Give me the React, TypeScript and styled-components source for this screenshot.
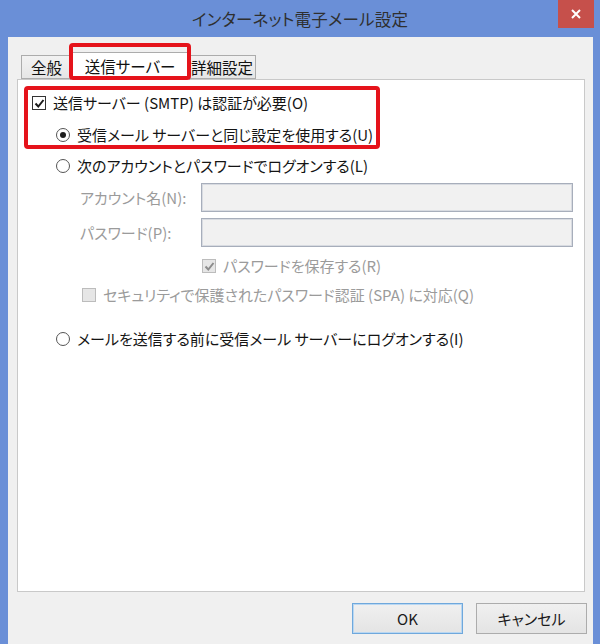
import React from 'react';
import styled, { createGlobalStyle } from 'styled-components';

const Global = createGlobalStyle`
  html, body { margin: 0; padding: 0; }
  body {
    width: 600px;
    height: 644px;
    overflow: hidden;
    font-family: "Noto Sans CJK JP", "Noto Sans", sans-serif;
  }
  * { box-sizing: border-box; }
`;

const Window = styled.div`
  width: 600px;
  height: 644px;
  background: #6a8fd7;
  display: flex;
  flex-direction: column;
`;

const TitleBar = styled.div`
  height: 37px;
  display: grid;
  grid-template-columns: 1fr auto 1fr;
  align-items: start;
`;

const Title = styled.div`
  grid-column: 2;
  font-size: 16.5px;
  line-height: 38px;
  color: #2f2f2f;
  font-feature-settings: "palt";
  letter-spacing: 0.2px;
`;

const CloseButton = styled.div`
  grid-column: 3;
  justify-self: end;
  margin-right: 6px;
  width: 36px;
  height: 28px;
  background: #c6504b;
  display: flex;
  align-items: center;
  justify-content: center;
`;

const Client = styled.div`
  flex: 1;
  margin: 0 7px 0 8px;
  background: #f0f0f0;
  padding: 18px 8px 0 9px;
  display: flex;
  flex-direction: column;
`;

const TabRow = styled.div`
  display: flex;
  align-items: flex-end;
  padding-left: 4px;
  height: 25px;
  margin-bottom: -1px;
  position: relative;
  z-index: 1;
`;

const Tab = styled.div<{ $active?: boolean; $width: number }>`
  position: relative;
  width: ${(p) => p.$width}px;
  height: ${(p) => (p.$active ? '28px' : '24px')};
  margin: ${(p) => (p.$active ? '0 -2px' : '0 0 1px 0')};
  padding-top: ${(p) => (p.$active ? '3px' : '1px')};
  text-align: center;
  background: ${(p) => (p.$active ? '#ffffff' : 'linear-gradient(#f2f2f2, #e6e6e6)')};
  border: 1px solid #acacac;
  border-bottom: ${(p) => (p.$active ? 'none' : '1px solid #acacac')};
  font-size: 15.5px;
  line-height: 21px;
  color: #111;
  z-index: ${(p) => (p.$active ? 2 : 1)};
  font-feature-settings: "palt";
  white-space: nowrap;
`;

const TabHighlight = styled.div`
  position: absolute;
  top: -10px;
  left: -2px;
  right: -2px;
  bottom: 0;
  border: 4px solid #e5131b;
  border-radius: 4px;
  pointer-events: none;
`;

const Panel = styled.div`
  flex: 1;
  background: #ffffff;
  border: 1px solid #c9c9c9;
  padding: 6px 0 0 6px;
  display: flex;
  flex-direction: column;
  align-items: flex-start;
`;

const Highlight = styled.div`
  width: 356px;
  border: 4px solid #e5131b;
  border-radius: 4px;
  padding: 3px 0 0 4px;
  display: flex;
  flex-direction: column;
  gap: 12px;
`;

const Row = styled.div<{ $indent?: number; $top?: number }>`
  display: flex;
  align-items: center;
  height: 20px;
  margin-left: ${(p) => p.$indent ?? 0}px;
  margin-top: ${(p) => p.$top ?? 0}px;
  gap: 7px;
  white-space: nowrap;
`;

const Text = styled.span<{ $disabled?: boolean }>`
  font-size: 15px;
  line-height: 20px;
  color: ${(p) => (p.$disabled ? '#9b9b9b' : '#141414')};
  font-feature-settings: "palt";
`;

const Box = styled.span<{ $disabled?: boolean }>`
  width: 14px;
  height: 14px;
  flex: none;
  border: 1px solid ${(p) => (p.$disabled ? '#bcbcbc' : '#333333')};
  background: ${(p) => (p.$disabled ? '#e6e6e6' : '#ffffff')};
  display: flex;
  align-items: center;
  justify-content: center;
`;

const RadioCircle = styled.span`
  width: 14px;
  height: 14px;
  flex: none;
  border: 1px solid #555555;
  border-radius: 50%;
  background: #ffffff;
  display: flex;
  align-items: center;
  justify-content: center;
`;

const RadioDot = styled.span`
  width: 6px;
  height: 6px;
  border-radius: 50%;
  background: #1d1d1d;
`;

const FieldRow = styled.div<{ $top: number }>`
  display: flex;
  align-items: center;
  margin-left: 56px;
  margin-top: ${(p) => p.$top}px;
`;

const FieldLabel = styled.span`
  width: 121px;
  font-size: 15px;
  color: #9b9b9b;
  font-feature-settings: "palt";
  white-space: nowrap;
`;

const Input = styled.div`
  width: 372px;
  height: 29px;
  border: 1px solid #a7aebb;
  box-shadow: inset 0 0 0 1px #d8dbe1;
  background: #f1f1f1;
`;

const Footer = styled.div`
  height: 52px;
  display: flex;
  justify-content: flex-end;
  align-items: flex-start;
  padding-top: 11px;
  gap: 13px;
  margin-right: -2px;
`;

const Button = styled.button<{ $default?: boolean }>`
  width: 111px;
  height: 31px;
  border: 1px solid ${(p) => (p.$default ? '#6fa8dc' : '#acacac')};
  box-shadow: ${(p) => (p.$default ? 'inset 0 0 0 1px #b9d7f2' : 'none')};
  background: linear-gradient(#f0f0f0, #e4e4e4);
  font-family: "Noto Sans CJK JP", "Noto Sans", sans-serif;
  font-size: 15px;
  color: #1a1a1a;
  font-feature-settings: "palt";
  padding: 0;
`;

const Check = ({ color }: { color: string }) => (
  <svg width="11" height="11" viewBox="0 0 11 11">
    <path d="M1.5 5.5 L4.3 8.5 L9.5 2" fill="none" stroke={color} strokeWidth="2" />
  </svg>
);

const CheckBox = ({ checked, disabled }: { checked?: boolean; disabled?: boolean }) => (
  <Box $disabled={disabled}>{checked && <Check color={disabled ? '#8c8c8c' : '#1a1a1a'} />}</Box>
);

const Radio = ({ checked }: { checked?: boolean }) => (
  <RadioCircle>{checked && <RadioDot />}</RadioCircle>
);

export default function App() {
  return (
    <>
      <Global />
      <Window>
        <TitleBar>
          <Title>インターネット電子メール設定</Title>
          <CloseButton>
            <svg width="10" height="10" viewBox="0 0 10 10">
              <path d="M1 1 L9 9 M9 1 L1 9" stroke="#ffffff" strokeWidth="2" />
            </svg>
          </CloseButton>
        </TitleBar>
        <Client>
          <TabRow>
            <Tab $width={51}>全般</Tab>
            <Tab $active $width={120}>
              送信サーバー
              <TabHighlight />
            </Tab>
            <Tab $width={68}>詳細設定</Tab>
          </TabRow>
          <Panel>
            <Highlight>
              <Row>
                <CheckBox checked />
                <Text>送信サーバー (SMTP) は認証が必要(O)</Text>
              </Row>
              <Row $indent={24}>
                <Radio checked />
                <Text>受信メール サーバーと同じ設定を使用する(U)</Text>
              </Row>
            </Highlight>
            <Row $indent={32} $top={7}>
              <Radio />
              <Text>次のアカウントとパスワードでログオンする(L)</Text>
            </Row>
            <FieldRow $top={7}>
              <FieldLabel>アカウント名(N):</FieldLabel>
              <Input />
            </FieldRow>
            <FieldRow $top={6}>
              <FieldLabel>パスワード(P):</FieldLabel>
              <Input />
            </FieldRow>
            <Row $indent={178} $top={9}>
              <CheckBox checked disabled />
              <Text $disabled>パスワードを保存する(R)</Text>
            </Row>
            <Row $indent={58} $top={9}>
              <CheckBox disabled />
              <Text $disabled>セキュリティで保護されたパスワード認証 (SPA) に対応(Q)</Text>
            </Row>
            <Row $indent={32} $top={24}>
              <Radio />
              <Text>メールを送信する前に受信メール サーバーにログオンする(I)</Text>
            </Row>
          </Panel>
          <Footer>
            <Button $default>OK</Button>
            <Button>キャンセル</Button>
          </Footer>
        </Client>
      </Window>
    </>
  );
}
